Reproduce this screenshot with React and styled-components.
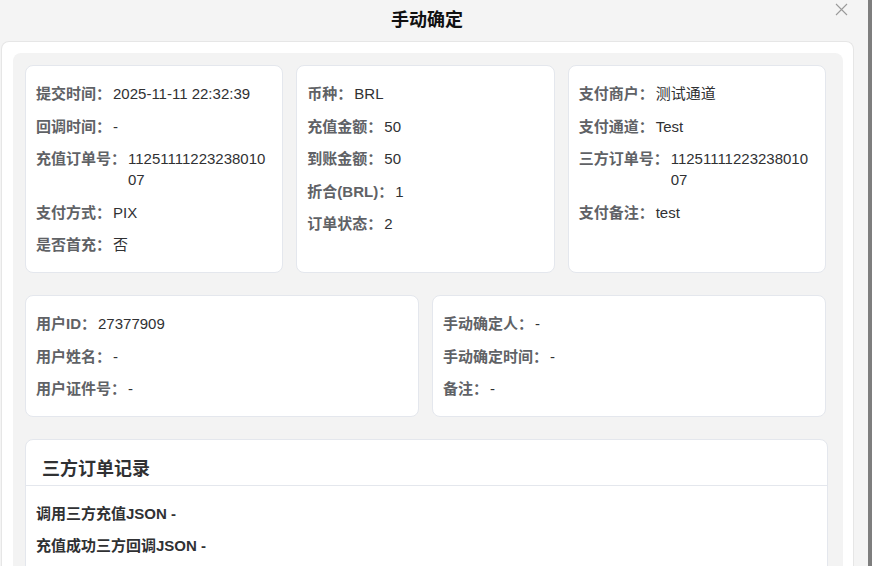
import React from 'react';
import styled, { createGlobalStyle } from 'styled-components';

const GlobalStyle = createGlobalStyle`
  html, body {
    margin: 0;
    padding: 0;
    height: 566px;
    overflow: hidden;
    background: #f4f4f4;
  }
  body {
    font-family: "Liberation Sans", "Noto Sans CJK SC", Arial, sans-serif;
  }
`;

const Page = styled.div`
  display: flex;
  height: 566px;
  overflow: hidden;
`;

const Modal = styled.div`
  width: 854px;
  display: flex;
  flex-direction: column;
  background: #f4f4f4;
`;

const Gutter = styled.div`
  width: 14px;
  background: #f4f4f4;
`;

const Backdrop = styled.div`
  width: 4px;
  background: #7e7e7e;
`;

const Header = styled.div`
  position: relative;
  flex-shrink: 0;
  height: 41px;
  display: flex;
  align-items: center;
  justify-content: center;
  padding-bottom: 5px;
  box-sizing: border-box;
`;

const Title = styled.h2`
  margin: 0;
  font-size: 18px;
  font-weight: 700;
  color: #111;
`;

const CloseButton = styled.button`
  position: absolute;
  top: 3px;
  right: 6px;
  width: 13px;
  height: 13px;
  padding: 0;
  border: none;
  background: transparent;
  display: flex;
`;

const Panel = styled.div`
  flex: 1;
  flex-shrink: 0;
  margin-left: 1px;
  background: #fff;
  border: 1px solid #e6e6e6;
  border-bottom: none;
  border-radius: 8px 8px 0 0;
  padding: 11px 10px 0 11px;
`;

const Inner = styled.div`
  background: #f3f3f3;
  border-radius: 8px 8px 0 0;
  padding: 12px 17px 12px 12px;
  min-height: 560px;
`;

const Grid = styled.div`
  display: grid;
  grid-template-columns: repeat(${p => p.$cols}, 1fr);
  gap: 13px;
  margin-bottom: 22px;
`;

const Card = styled.div`
  background: #fff;
  border: 1px solid #e4e7ed;
  border-radius: 8px;
  padding: 17px 10px;
`;

const Row = styled.div`
  display: flex;
  font-size: 15px;
  line-height: 21px;
  margin-bottom: 11.5px;

  &:last-child {
    margin-bottom: 0;
  }
`;

const Label = styled.span`
  flex-shrink: 0;
  color: #606266;
  font-weight: 700;
  margin-right: 2px;
`;

const Value = styled.span`
  color: #303133;
  word-break: break-all;
`;

const Section = styled.div`
  background: #fff;
  border: 1px solid #e4e7ed;
  border-radius: 8px;
  margin-right: -2px;
`;

const SectionHead = styled.div`
  padding: 17px 16px 4px;
  line-height: 24px;
  font-size: 18px;
  font-weight: 700;
  color: #303133;
  border-bottom: 1px solid #e4e7ed;
`;

const SectionBody = styled.div`
  padding: 17px 10px;
`;

const JsonLine = styled.div`
  font-size: 15px;
  line-height: 21px;
  font-weight: 700;
  color: #303133;
  margin-bottom: 11px;
`;

const orderInfo = [
  [
    ['提交时间：', '2025-11-11 22:32:39'],
    ['回调时间：', '-'],
    ['充值订单号：', '1125111122323801007'],
    ['支付方式：', 'PIX'],
    ['是否首充：', '否'],
  ],
  [
    ['币种：', 'BRL'],
    ['充值金额：', '50'],
    ['到账金额：', '50'],
    ['折合(BRL)：', '1'],
    ['订单状态：', '2'],
  ],
  [
    ['支付商户：', '测试通道'],
    ['支付通道：', 'Test'],
    ['三方订单号：', '1125111122323801007'],
    ['支付备注：', 'test'],
  ],
];

const userInfo = [
  [
    ['用户ID：', '27377909'],
    ['用户姓名：', '-'],
    ['用户证件号：', '-'],
  ],
  [
    ['手动确定人：', '-'],
    ['手动确定时间：', '-'],
    ['备注：', '-'],
  ],
];

function InfoCard({ rows }) {
  return (
    <Card>
      {rows.map(([label, value]) => (
        <Row key={label}>
          <Label>{label}</Label>
          <Value>{value}</Value>
        </Row>
      ))}
    </Card>
  );
}

export default function App() {
  return (
    <Page>
      <GlobalStyle />
      <Modal>
        <Header>
          <Title>手动确定</Title>
          <CloseButton aria-label="close">
            <svg width="13" height="13" viewBox="0 0 13 13">
              <path d="M1 1L12 12M12 1L1 12" stroke="#9a9a9a" strokeWidth="1.1" fill="none" />
            </svg>
          </CloseButton>
        </Header>
        <Panel>
          <Inner>
            <Grid $cols={3}>
              {orderInfo.map((rows, i) => <InfoCard key={i} rows={rows} />)}
            </Grid>
            <Grid $cols={2}>
              {userInfo.map((rows, i) => <InfoCard key={i} rows={rows} />)}
            </Grid>
            <Section>
              <SectionHead>三方订单记录</SectionHead>
              <SectionBody>
                <JsonLine>调用三方充值JSON -</JsonLine>
                <JsonLine>充值成功三方回调JSON -</JsonLine>
              </SectionBody>
            </Section>
          </Inner>
        </Panel>
      </Modal>
      <Gutter />
      <Backdrop />
    </Page>
  );
}
